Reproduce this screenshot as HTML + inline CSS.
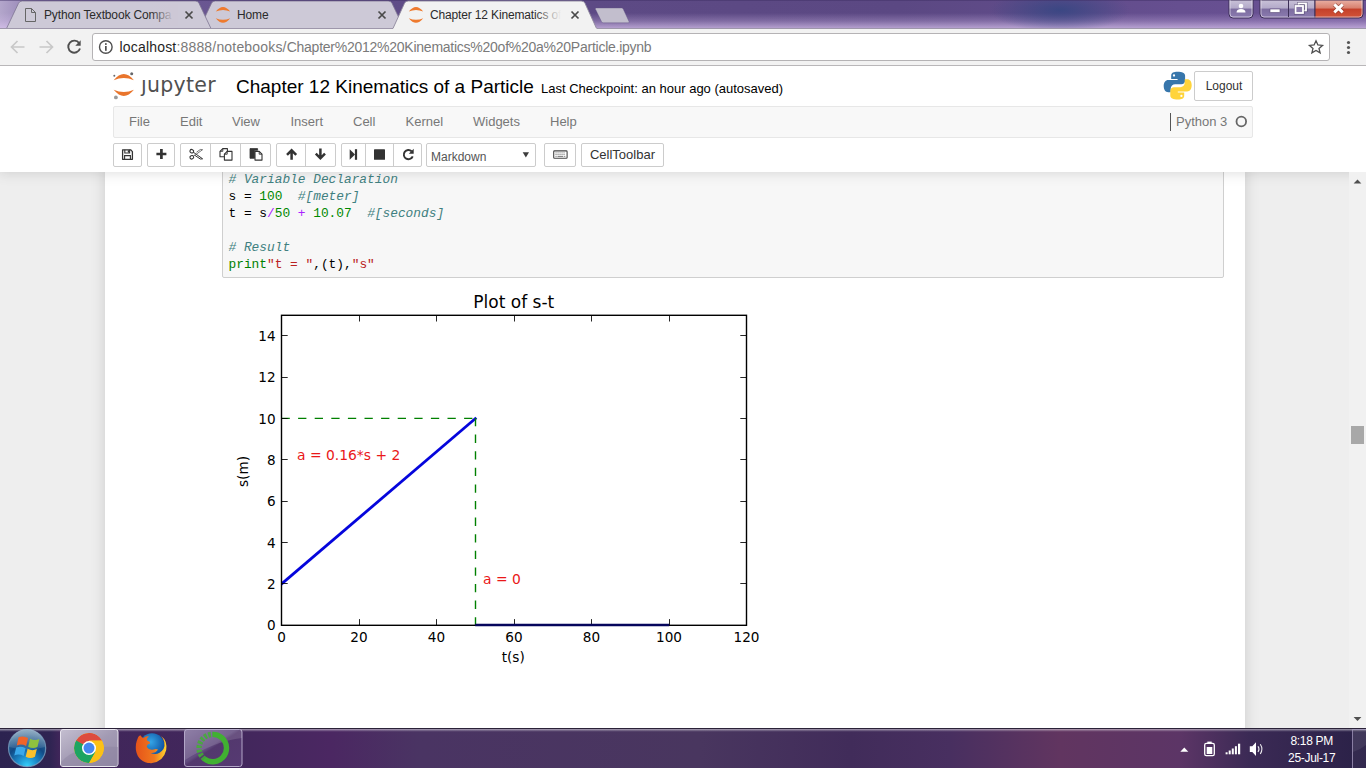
<!DOCTYPE html>
<html lang="en">
<head>
<meta charset="utf-8">
<title>Chapter 12 Kinematics of a Particle</title>
<style>
*{box-sizing:border-box;margin:0;padding:0}
html,body{width:1366px;height:768px;overflow:hidden;background:#fff;font-family:"Liberation Sans",Arial,sans-serif}
.abs{position:absolute}
#screen{position:relative;width:1366px;height:768px;overflow:hidden}

/* ---------- window frame / tab strip ---------- */
#titlebar{left:0;top:0;width:1366px;height:29px;
 background:
  radial-gradient(ellipse 70px 22px at 1060px 10px,rgba(52,70,130,.85),rgba(52,70,130,0) 100%),
  linear-gradient(to bottom,rgba(214,190,236,0) 0,rgba(214,190,236,0) 13px,rgba(214,190,236,.3) 21px,rgba(218,196,238,.7) 28px),
  linear-gradient(to right,#b3a6cb 0,#8a78ad 40px,#6d5a95 140px,#5e4b86 420px,#5b4883 900px,#664f90 1180px,#6a5194 1366px);
}
.tab{top:1px;height:28px}
.tabtxt{top:8px;font-size:12px;line-height:14px;color:#2b2b2b;white-space:nowrap;overflow:hidden;letter-spacing:-.15px}
.tabx{top:8px;font-size:12px;color:#4a4a4a}

/* ---------- chrome toolbar ---------- */
#ctb{left:0;top:29px;width:1366px;height:37px;background:#f2f2f2;border-bottom:1px solid #b9b7b9}
#omni{left:92px;top:33px;width:1238px;height:28px;background:#fff;border:1px solid #b5b3b5;border-radius:3px}
#url{left:119.500px;top:39px;font-size:14px;color:#7a7a7a;white-space:nowrap;letter-spacing:.18px}
#url b{font-weight:normal;color:#1f1f1f}
#url span{letter-spacing:-.25px}

/* ---------- page ---------- */
#page{left:0;top:66px;width:1366px;height:662px;background:#eee;overflow:hidden}
#nbwhite{left:105px;top:100px;width:1140px;height:600px;background:#fff;box-shadow:0 0 12px 1px rgba(87,87,87,.2)}
#header{left:0;top:0;width:1366px;height:106px;background:#fff;box-shadow:0 0 12px 1px rgba(87,87,87,.2)}
#jtxt{left:141px;top:6.500px;font-family:"DejaVu Sans","Liberation Sans",sans-serif;font-size:20.5px;line-height:24px;color:#505050;letter-spacing:.3px}
#nbname{left:236px;top:10px;font-size:19px;line-height:22px;color:#000;white-space:nowrap}
#ckpt{left:541px;top:15px;font-size:13px;line-height:15px;color:#000;white-space:nowrap}
#logout{left:1194px;top:5px;width:59px;height:30px;border:1px solid #ccc;border-radius:2px;background:#fff;font-size:12px;color:#333;text-align:center;line-height:29px;padding-left:1px}
#menubar{left:113px;top:40px;width:1140px;height:32px;background:#f8f8f8;border:1px solid #e7e7e7;border-radius:2px}
.mi{top:47.500px;font-size:13px;line-height:15px;color:#777;white-space:nowrap}
.tb{top:77px;height:24px;border:1px solid #ccc;background:#fff;border-radius:2px}
.tb i{position:absolute;top:0;bottom:0;width:1px;background:#ccc}
#celltype{left:426px;top:77px;width:110px;height:24px;border:1px solid #ccc;border-radius:2px;background:#fff;font-size:12px;color:#555;line-height:27px;padding-left:4px}
#ctbtxt{left:581px;top:77px;width:83px;height:24px;border:1px solid #ccc;border-radius:2px;background:#fff;font-size:13px;color:#333;text-align:center;line-height:21px}

#inputarea{left:222px;top:96px;width:1002px;height:116px;background:#f7f7f7;border:1px solid #cfcfcf;border-radius:2px}
#code{left:228.500px;top:104.600px;font-family:"Liberation Mono",monospace;font-size:12.83px;line-height:17px;color:#000;white-space:pre}
#code .c{color:#408080;font-style:italic}
#code .n{color:#080}
#code .o{color:#a2f}
#code .k{color:#008000}
#code .s{color:#ba2121}

/* ---------- scrollbar ---------- */
#sb{left:1349px;top:172px;width:17px;height:556px;background:#f1f1f1}
#thumb{left:1351px;top:426px;width:13px;height:18px;background:#a8a8a8}

/* ---------- taskbar ---------- */
#taskbar{left:0;top:728px;width:1366px;height:40px;
 background:
  linear-gradient(to bottom,rgba(255,255,255,.55) 0,rgba(255,255,255,.12) 2px,rgba(255,255,255,0) 3px),
  linear-gradient(to right,#2c2350 0,#2f2452 50px,#40265a 60px,#42275c 240px,#4b2762 330px,#4a3463 420px,#49365f 700px,#412c5a 850px,#482f60 950px,#613560 1060px,#5c3566 1180px,#3b2a55 1250px,#2a2147 1366px);
 border-top:1px solid #2a2238}
.clock{color:#fff;font-size:12px;line-height:14px;white-space:nowrap;text-align:center;width:80px;left:1271.700px;letter-spacing:-.3px}
</style>
</head>
<body>
<div id="screen">

<!-- ======= title bar + tabs ======= -->
<div id="titlebar" class="abs"></div>
<svg class="abs" style="left:0;top:0" width="1366" height="30" viewBox="0 0 1366 30">
  <!-- inactive tab 2 -->
  <path d="M199.5 28.5 L211.5 3.300 Q212.5 1 215.3 1 L388.2 1 Q391.0 1 392.0 3.300 L404.0 28.5 Z" fill="#cdc9d7" stroke="#7d7592" stroke-width=".8"/>
  <!-- inactive tab 1 -->
  <path d="M6.5 28.5 L18.5 3.300 Q19.5 1 22.3 1 L195.2 1 Q198.0 1 199.0 3.300 L211.0 28.5 Z" fill="#cdc9d7" stroke="#7d7592" stroke-width=".8"/>
  <!-- new tab button -->
  <path d="M596.300 8 L621.500 8 Q622.700 8 623.300 9.200 L629 21.500 Q629.500 22.800 628.200 22.800 L603.300 22.800 Q602.100 22.800 601.500 21.600 L595.500 9.200 Q595 8 596.300 8 Z" fill="#c2becd" stroke="#5f5180" stroke-opacity=".55" stroke-width=".7"/>
  <line x1="0" y1="28.500" x2="1366" y2="28.500" stroke="#9e97ab" stroke-width="1"/>
  <line x1="0" y1=".5" x2="1366" y2=".5" stroke="#3d2f63" stroke-opacity=".45" stroke-width="1"/>
  <!-- active tab -->
  <path d="M392.5 29.5 L404.5 3.300 Q405.5 1 408.3 1 L581.2 1 Q584.0 1 585.0 3.300 L597.0 29.5 Z" fill="#f2f2f2" stroke="#8d879c" stroke-width=".9"/>
  <rect x="393.500" y="28" width="203" height="2" fill="#f2f2f2"/>
  <!-- page icon -->
  <path d="M25.500 8.500 L31.500 8.500 L35.500 12.500 L35.500 21.500 L25.500 21.500 Z M31.500 8.500 L31.500 12.500 L35.500 12.500" fill="none" stroke="#666" stroke-width="1"/>
  <!-- jupyter favicons -->
  <g fill="#ee7a2e"><path d="M215.8 11.600 Q223.0 2.600 230.2 11.600 Q223.0 8.300 215.8 11.600 Z"/><path d="M215.8 18.200 Q223.0 27.200 230.2 18.200 Q223.0 21.500 215.8 18.200 Z"/><path d="M408.8 11.600 Q416.0 2.600 423.2 11.600 Q416.0 8.300 408.8 11.600 Z"/><path d="M408.8 18.200 Q416.0 27.200 423.2 18.200 Q416.0 21.500 408.8 18.200 Z"/></g>
  <!-- close x -->
  <g stroke="#4a4a4a" stroke-width="1.700" fill="none">
    <path d="M185.500 11.500 L192.500 18.500 M192.500 11.500 L185.500 18.500"/>
    <path d="M378.500 11.500 L385.500 18.500 M385.500 11.500 L378.500 18.500"/>
    <path d="M571.500 11.500 L578.500 18.500 M578.500 11.500 L571.500 18.500"/>
  </g>
</svg>
<div class="abs tabtxt" style="left:44px;width:132px">Python Textbook Compa</div>
<div class="abs tabtxt" style="left:237px;width:120px">Home</div>
<div class="abs tabtxt" style="left:430px;width:132px">Chapter 12 Kinematics of</div>
<div class="abs" style="left:150px;top:4px;width:28px;height:22px;background:linear-gradient(to right,rgba(205,200,214,0),rgba(205,200,214,1) 85%)"></div>
<div class="abs" style="left:534px;top:4px;width:30px;height:22px;background:linear-gradient(to right,rgba(242,242,242,0),rgba(242,242,242,1) 90%)"></div>

<!-- window buttons -->
<svg class="abs" style="left:1224px;top:0" width="142" height="22" viewBox="0 0 142 22">
  <defs>
    <linearGradient id="wb" x1="0" y1="0" x2="0" y2="1"><stop offset="0" stop-color="#c9c2d8"/><stop offset=".45" stop-color="#b3aac9"/><stop offset=".5" stop-color="#7c6c9f"/><stop offset="1" stop-color="#8b7bb0"/></linearGradient>
    <linearGradient id="wc" x1="0" y1="0" x2="0" y2="1"><stop offset="0" stop-color="#e9b0a4"/><stop offset=".45" stop-color="#d8806e"/><stop offset=".5" stop-color="#c4402a"/><stop offset="1" stop-color="#d2553a"/></linearGradient>
  </defs>
  <path d="M5 0 L5 14 Q5 18 9 18 L25 18 Q29 18 29 14 L29 0 Z" fill="url(#wb)" stroke="#3c2f57" stroke-width="1"/>
  <path d="M6 0 L6 14 Q6 17 9 17 L25 17 Q28 17 28 14 L28 0" fill="none" stroke="#e6e0f0" stroke-opacity=".7" stroke-width="1"/>
  <path d="M36 0 L36 14 Q36 18 40 18 L91 18 L91 0 Z" fill="url(#wb)" stroke="#3c2f57" stroke-width="1"/>
  <path d="M91 0 L91 18 L135 18 Q139 18 139 14 L139 0 Z" fill="url(#wc)" stroke="#3c2f57" stroke-width="1"/>
  <path d="M37 0 L37 14 Q37 17 40 17 L135 17 Q138 17 138 14 L138 0" fill="none" stroke="#f0e8f4" stroke-opacity=".6" stroke-width="1"/>
  <line x1="64.500" y1="0" x2="64.500" y2="17" stroke="#3c2f57"/>
  <!-- user glyph -->
  <circle cx="17" cy="6" r="2.300" fill="#fff"/><path d="M12.500 12.500 Q12.500 9 17 9 Q21.500 9 21.500 12.500 Z" fill="#fff"/>
  <!-- min -->
  <rect x="46" y="9" width="10" height="3.500" fill="#fff" stroke="#5a4a78" stroke-width=".6"/>
  <!-- max -->
  <rect x="74.500" y="3.500" width="7.500" height="7" fill="none" stroke="#3c2f57" stroke-opacity=".6" stroke-width="3"/><rect x="74.500" y="3.500" width="7.500" height="7" fill="none" stroke="#fff" stroke-width="1.800"/>
  <rect x="71.500" y="6" width="7.500" height="7" fill="#8a7bab" stroke="#3c2f57" stroke-opacity=".6" stroke-width="3"/><rect x="71.500" y="6" width="7.500" height="7" fill="#8a7bab" stroke="#fff" stroke-width="1.800"/>
  <!-- close -->
  <path d="M110.300 4.300 L118.700 12.300 M118.700 4.300 L110.300 12.300" stroke="#6e241a" stroke-opacity=".55" stroke-width="4.400"/><path d="M110.300 4.300 L118.700 12.300 M118.700 4.300 L110.300 12.300" stroke="#fff" stroke-width="3"/>
</svg>

<!-- ======= chrome toolbar ======= -->
<div id="ctb" class="abs"></div>
<div id="omni" class="abs"></div>
<svg class="abs" style="left:0;top:29px" width="1366" height="36" viewBox="0 29 1366 36">
  <g fill="none" stroke="#c8c8c8" stroke-width="1.700">
    <path d="M24.500 47 L11.500 47 M17.500 41 L11.500 47 L17.500 53"/>
    <path d="M39.500 47 L52.500 47 M46.500 41 L52.500 47 L46.500 53"/>
  </g>
  <path d="M79.200 43.200 A6 6 0 1 0 80 48.500" fill="none" stroke="#4f4f4f" stroke-width="1.900"/>
  <path d="M80.700 40.300 L80.700 45.700 L75.300 45.700 Z" fill="#4f4f4f"/>
  <circle cx="105.800" cy="47" r="6.300" fill="none" stroke="#4f4f4f" stroke-width="1.400"/>
  <rect x="105" y="46" width="1.700" height="4.800" fill="#4f4f4f"/><rect x="105" y="43.200" width="1.700" height="1.700" fill="#4f4f4f"/>
  <path d="M1316 40.800 L1317.900 45 L1322.500 45.400 L1319 48.400 L1320.100 52.900 L1316 50.500 L1311.900 52.900 L1313 48.400 L1309.500 45.400 L1314.100 45 Z" fill="none" stroke="#4f4f4f" stroke-width="1.300"/>
  <circle cx="1348.500" cy="42.500" r="1.600" fill="#555"/><circle cx="1348.500" cy="47.500" r="1.600" fill="#555"/><circle cx="1348.500" cy="52.500" r="1.600" fill="#555"/>
</svg>
<div id="url" class="abs"><b>localhost</b>:8888/notebooks/<span>Chapter%2012%20Kinematics%20of%20a%20Particle.ipynb</span></div>

<!-- ======= page ======= -->
<div id="page" class="abs">
  <div id="nbwhite" class="abs"></div>

  <!-- code cell -->
  <div id="inputarea" class="abs"></div>
<pre id="code" class="abs"><span class="c"># Variable Declaration</span>
s = <span class="n">100</span>  <span class="c">#[meter]</span>
t = s<span class="o">/</span><span class="n">50</span> <span class="o">+</span> <span class="n">10.07</span>  <span class="c">#[seconds]</span>

<span class="c"># Result</span>
<span class="k">print</span><span class="s">"t = "</span>,(t),<span class="s">"s"</span></pre>

  <!-- plot -->
  <svg id="plot" class="abs" style="left:222px;top:220px" width="560" height="390" viewBox="222 286 560 390" font-family="'DejaVu Sans',sans-serif">
    <defs><clipPath id="axclip"><rect x="281.5" y="315.3" width="465.0" height="310.0"/></clipPath></defs>
    <g clip-path="url(#axclip)">
    <path d="M281.5 583.97 L475.25 418.63" fill="none" stroke="#0505dc" stroke-width="2.8" stroke-linecap="square"/>
    <path d="M475.25 625.3 L669.0 625.3" fill="none" stroke="#0505dc" stroke-width="2.8"/>
    <path d="M281.5 418.4 L475.25 418.4" fill="none" stroke="#008000" stroke-width="1.4" stroke-dasharray="8.3 8.3"/>
    <path d="M475.5 418.0 L475.5 625.3" fill="none" stroke="#008000" stroke-width="1.4" stroke-dasharray="8.3 8.3"/>
    </g>
    <path d="M281.5 625.3 V619.0999999999999 M281.5 315.3 V321.5 M359.5 625.3 V619.0999999999999 M359.5 315.3 V321.5 M436.5 625.3 V619.0999999999999 M436.5 315.3 V321.5 M514.5 625.3 V619.0999999999999 M514.5 315.3 V321.5 M591.5 625.3 V619.0999999999999 M591.5 315.3 V321.5 M669.5 625.3 V619.0999999999999 M669.5 315.3 V321.5 M746.5 625.3 V619.0999999999999 M746.5 315.3 V321.5 M281.5 625.5 H287.7 M746.5 625.5 H740.3 M281.5 583.5 H287.7 M746.5 583.5 H740.3 M281.5 542.5 H287.7 M746.5 542.5 H740.3 M281.5 501.5 H287.7 M746.5 501.5 H740.3 M281.5 459.5 H287.7 M746.5 459.5 H740.3 M281.5 418.5 H287.7 M746.5 418.5 H740.3 M281.5 377.5 H287.7 M746.5 377.5 H740.3 M281.5 335.5 H287.7 M746.5 335.5 H740.3" fill="none" stroke="#000" stroke-width="1" stroke-opacity=".85"/>
    <rect x="281.5" y="315.3" width="465.0" height="310.0" fill="none" stroke="#000" stroke-width="1.4"/>
    <path d="M475.2 625 H669.2" fill="none" stroke="#06065c" stroke-width="2.500"/>
    <g font-size="13.6" fill="#000" text-anchor="middle">
    <text x="281.5" y="641.8">0</text>
    <text x="359.0" y="641.8">20</text>
    <text x="436.5" y="641.8">40</text>
    <text x="514.0" y="641.8">60</text>
    <text x="591.5" y="641.8">80</text>
    <text x="669.0" y="641.8">100</text>
    <text x="746.5" y="641.8">120</text>
    </g>
    <g font-size="13.6" fill="#000" text-anchor="end">
    <text x="275.6" y="630.2">0</text>
    <text x="275.6" y="588.9">2</text>
    <text x="275.6" y="547.5">4</text>
    <text x="275.6" y="506.2">6</text>
    <text x="275.6" y="464.9">8</text>
    <text x="275.6" y="423.5">10</text>
    <text x="275.6" y="382.2">12</text>
    <text x="275.6" y="340.9">14</text>
    </g>
    <text x="513.8" y="307.8" font-size="17" text-anchor="middle" fill="#000">Plot of s-t</text>
    <text x="513.2" y="662" font-size="13.6" text-anchor="middle" fill="#000">t(s)</text>
    <text transform="translate(247.6 471.5) rotate(-90)" font-size="13.6" text-anchor="middle" fill="#000">s(m)</text>
    <text x="297" y="459.9" font-size="13.89" fill="#ea1818">a = 0.16*s + 2</text>
    <text x="483" y="583.8" font-size="13.89" fill="#ea1818">a = 0</text>
  </svg>

  <!-- header -->
  <div id="header" class="abs">
    <svg class="abs" style="left:108px;top:0" width="32" height="40" viewBox="108 66 32 40">
      <path d="M113.700 80.200 Q123.800 67.800 133.900 80.200 Q123.800 75.700 113.700 80.200 Z" fill="#e9752c"/>
      <path d="M113.700 89.700 Q123.800 102.100 133.900 89.700 Q123.800 94.200 113.700 89.700 Z" fill="#e9752c"/>
      <circle cx="115.900" cy="97.400" r="1.900" fill="#9a9a9a"/><circle cx="131.700" cy="73.700" r="1.500" fill="#66676b"/><circle cx="114.300" cy="75.700" r="1" fill="#66676b"/>
    </svg>
    <div id="jtxt" class="abs">jupyter</div>
    <div class="abs" style="left:141px;top:9px;width:6px;height:4.500px;background:#fff"></div>
    <div id="nbname" class="abs">Chapter 12 Kinematics of a Particle</div>
    <div id="ckpt" class="abs">Last Checkpoint: an hour ago (autosaved)</div>
    <div id="logout" class="abs">Logout</div>
    <div id="menubar" class="abs"></div>
    <div class="abs mi" style="left:129px">File</div>
    <div class="abs mi" style="left:180px">Edit</div>
    <div class="abs mi" style="left:232px">View</div>
    <div class="abs mi" style="left:290.5px">Insert</div>
    <div class="abs mi" style="left:353px">Cell</div>
    <div class="abs mi" style="left:405.5px">Kernel</div>
    <div class="abs mi" style="left:473px">Widgets</div>
    <div class="abs mi" style="left:550px">Help</div>
    <div class="abs" style="left:1170px;top:47px;width:1px;height:18px;background:#555"></div>
    <div class="abs mi" style="left:1176px">Python 3</div>
    <svg class="abs" style="left:1233px;top:47px" width="17" height="17" viewBox="0 0 17 17"><circle cx="8.300" cy="8.500" r="4.800" fill="none" stroke="#666" stroke-width="1.800"/></svg>

    <div class="abs tb" style="left:113px;width:29px"></div>
    <div class="abs tb" style="left:147px;width:28px"></div>
    <div class="abs tb" style="left:180px;width:91px"><i style="left:29px"></i><i style="left:59px"></i></div>
    <div class="abs tb" style="left:276px;width:60px"><i style="left:28px"></i></div>
    <div class="abs tb" style="left:341px;width:81px"><i style="left:23px"></i><i style="left:51px"></i></div>
    <div id="celltype" class="abs">Markdown</div>
    <div class="abs tb" style="left:544px;width:32px"></div>
    <div id="ctbtxt" class="abs">CellToolbar</div>
    <svg class="abs" style="left:0;top:0" width="1366" height="106" viewBox="0 66 1366 106">
      <!-- save -->
      <path d="M122.600 149.800 H130.600 L132.400 151.600 V159.300 H122.600 Z" fill="#fff" stroke="#333" stroke-width="1.300" stroke-linejoin="round"/>
      <path d="M124.800 149.800 V153 H129.600 V149.800" fill="none" stroke="#333" stroke-width="1.100"/>
      <rect x="127.800" y="150.300" width="1.300" height="2.200" fill="#333"/>
      <path d="M124.600 159.300 V155.600 H130.400 V159.300" fill="none" stroke="#333" stroke-width="1.100"/>
      <!-- plus -->
      <path d="M161.400 149 V159 M156.400 154 H166.400" stroke="#333" stroke-width="2.700" fill="none"/>
      <!-- scissors -->
      <g fill="none" stroke="#333" stroke-width="1.100" transform="translate(0 -.5)">
        <ellipse cx="191.800" cy="151.700" rx="1.900" ry="1.700" transform="rotate(25 191.800 151.700)"/>
        <ellipse cx="191.800" cy="157.800" rx="1.900" ry="1.700" transform="rotate(-25 191.800 157.800)"/>
        <path d="M193.300 152.700 L202.600 159.300 L200.300 159.500 L194.500 155.600" stroke-width="1"/>
        <path d="M193.300 156.800 L202.600 150.200 L200.300 150 L196.500 152.700" stroke-width=".9" stroke="#666"/>
      </g>
      <!-- copy -->
      <g fill="#fff" stroke="#333" stroke-width="1.100" stroke-linejoin="round">
        <path d="M220 151.300 L222.800 148.600 H227.400 V156.800 H220 Z"/>
        <path d="M220 151.300 H222.800 V148.600" fill="none" stroke-width=".9"/>
        <path d="M224.400 154.200 L227.200 151.400 H232 V160.100 H224.400 Z"/>
        <path d="M224.400 154.200 H227.200 V151.400" fill="none" stroke-width=".9"/>
      </g>
      <!-- paste -->
      <path d="M250 148.600 H257.600 V150.300 H254.500 V158.300 H250 Z" fill="#333" stroke="#333" stroke-width=".8"/>
      <path d="M255 151.400 H259.200 L262 154.200 V160.100 H255 Z" fill="#fff" stroke="#333" stroke-width="1.100" stroke-linejoin="round"/>
      <path d="M259.200 151.400 V154.200 H262" fill="none" stroke="#333" stroke-width=".9"/>
      <!-- arrow up -->
      <path d="M291.600 159.800 V151.500 M287 154.900 L291.600 150.300 L296.200 154.900" fill="none" stroke="#333" stroke-width="2.500" stroke-linecap="butt" stroke-linejoin="miter"/>
      <!-- arrow down -->
      <path d="M320.400 148.600 V157 M315.800 153.700 L320.400 158.300 L325 153.700" fill="none" stroke="#333" stroke-width="2.500" stroke-linecap="butt" stroke-linejoin="miter"/>
      <!-- step forward -->
      <path d="M349.700 149.200 L355 154.500 L349.700 159.800 Z" fill="#333"/>
      <rect x="354.900" y="149.200" width="2.200" height="10.600" fill="#333"/>
      <!-- stop -->
      <rect x="374" y="149.200" width="11" height="10.600" rx=".6" fill="#333"/>
      <!-- repeat -->
      <path d="M411.600 151.300 A4.600 4.600 0 1 0 412.700 156.300" fill="none" stroke="#333" stroke-width="1.900"/>
      <path d="M413.700 148.800 V153.700 H408.800 Z" fill="#333"/>
      <!-- select arrow -->
      <path d="M522.700 152.300 H529 L525.850 157.600 Z" fill="#3c3c3c"/>
      <!-- keyboard -->
      <rect x="553.700" y="150.900" width="13.400" height="7.300" rx=".8" fill="#fff" stroke="#444" stroke-width="1.100"/>
      <path d="M555.500 152.900 H565.300 M555.500 154.600 H565.300" stroke="#777" stroke-width="1" stroke-dasharray="1.100 .9" fill="none"/>
      <path d="M555.500 156.400 H556.600 M557.500 156.400 H563.300 M564.200 156.400 H565.300" stroke="#777" stroke-width="1" fill="none"/>
      <!-- python logo -->
      <g>
        <path d="M1177.400 71.800 c-3.500 0 -6.200 1 -6.200 3.800 v3.300 h6.400 v1 h-9.300 c-2.800 0 -4.600 2.400 -4.600 6.200 c0 3.800 1.700 6.100 4.500 6.100 h2.500 v-3.600 c0 -2.500 2 -4.400 4.500 -4.400 h6.300 c2 0 3.600 -1.600 3.600 -3.700 v-4.900 c0 -2.400 -2.800 -3.800 -7.700 -3.800 z" fill="#3776ab"/>
        <circle cx="1174" cy="75.500" r="1.150" fill="#fff"/>
        <path d="M1178 99.600 c3.500 0 6.200 -1 6.200 -3.800 v-3.300 h-6.400 v-1 h9.300 c2.800 0 4.600 -2.400 4.600 -6.200 c0 -3.800 -1.700 -6.100 -4.500 -6.100 h-2.500 v3.600 c0 2.500 -2 4.400 -4.500 4.400 h-6.300 c-2 0 -3.600 1.600 -3.600 3.700 v4.900 c0 2.400 2.800 3.800 7.700 3.800 z" fill="#ffd43b"/>
        <circle cx="1181.400" cy="95.900" r="1.150" fill="#fff"/>
      </g>
    </svg>
  </div>
</div>

<!-- ======= scrollbar ======= -->
<div id="sb" class="abs"></div>
<div id="thumb" class="abs"></div>
<svg class="abs" style="left:1349px;top:172px" width="17" height="556" viewBox="0 172 17 556">
  <path d="M4.600 183.400 L8.500 179.400 L12.400 183.400 Z" fill="#505050"/>
  <path d="M4.600 717 L8.500 721 L12.400 717 Z" fill="#505050"/>
</svg>

<!-- ======= taskbar ======= -->
<div id="taskbar" class="abs"></div>
<svg class="abs" style="left:0;top:728px" width="1366" height="40" viewBox="0 728 1366 40">
  <defs>
    <radialGradient id="orb" cx=".5" cy=".98" r=".98"><stop offset="0" stop-color="#35d0fb"/><stop offset=".3" stop-color="#1b86c6"/><stop offset=".58" stop-color="#114a86"/><stop offset=".8" stop-color="#2a5f8f"/><stop offset="1" stop-color="#5f88a8"/></radialGradient>
    <linearGradient id="orbhi" x1="0" y1="0" x2="0" y2="1"><stop offset="0" stop-color="#c9d6e0" stop-opacity=".5"/><stop offset="1" stop-color="#fff" stop-opacity=".08"/></linearGradient>
    <linearGradient id="btnA" x1="0" y1="0" x2="1" y2="1"><stop offset="0" stop-color="#c4bed0"/><stop offset=".5" stop-color="#a29ab3"/><stop offset="1" stop-color="#9389a6"/></linearGradient>
    <linearGradient id="btnB" x1="0" y1="0" x2="1" y2="1"><stop offset="0" stop-color="#7f6d9a"/><stop offset=".45" stop-color="#634d80"/><stop offset=".5" stop-color="#53386e"/><stop offset="1" stop-color="#563a72"/></linearGradient>
    <radialGradient id="ffg" cx=".45" cy=".35" r=".6"><stop offset="0" stop-color="#35a5e6"/><stop offset="1" stop-color="#0c4fa0"/></radialGradient>
    <linearGradient id="fox" x1="0" y1="0" x2="1" y2="0"><stop offset="0" stop-color="#e5531a"/><stop offset=".6" stop-color="#f0781e"/><stop offset="1" stop-color="#ffd42e"/></linearGradient>
    <clipPath id="chc"><circle cx="89" cy="748.100" r="15"/></clipPath>
  </defs>
  <!-- start orb -->
  <circle cx="27.100" cy="748.100" r="18.600" fill="url(#orb)" stroke="#7fa6c6" stroke-opacity=".75" stroke-width="1.200"/>
  <path d="M9.300 747 A17.800 17.800 0 0 1 44.900 747 Q27 752 9.300 747 Z" fill="url(#orbhi)"/>
  <g transform="translate(27.600 747.600) scale(1.130) translate(-27.600 -747.600)">
  <path d="M19.600 738.500 Q24 736.800 28 739.200 L26.300 746.200 Q22.300 744 18 745.700 Z" fill="#f0642a"/>
  <path d="M29.800 739.800 Q33.800 742 38 740 L36.300 747 Q32.300 749 28.100 746.800 Z" fill="#8fc23e"/>
  <path d="M17.500 747.500 Q21.800 745.800 25.800 748.100 L24.100 755 Q20.100 752.800 15.800 754.500 Z" fill="#3aa8ea"/>
  <path d="M27.600 748.700 Q31.700 751 35.800 748.900 L34.100 755.800 Q30 758 25.900 755.600 Z" fill="#fbc02b"/>
  </g>
  <!-- chrome button -->
  <rect x="60.500" y="729.500" width="57.500" height="37" rx="2.500" fill="url(#btnA)" stroke="#e9e6ef" stroke-width="1"/>
  <path d="M61 762 Q75 745 118 747 L118 766 L61 766 Z" fill="#8c83a0" fill-opacity=".45"/>
  <g clip-path="url(#chc)">
    <circle cx="89" cy="748.100" r="15" fill="#fbc116"/>
    <path d="M89 748.100 L76.010 740.600 A15 15 0 0 1 101.990 740.600 L89 740.600 Z" fill="#dd4b3e"/>
    <path d="M89 733.100 A15 15 0 0 1 101.990 740.600 L89 740.600 Z M76.010 740.600 L89 740.600 L89 748.100 Z" fill="#dd4b3e"/>
    <path d="M76.010 740.600 A15 15 0 0 0 89 763.100 L95.500 751.850 L89 748.100 Z" fill="#1da462"/>
    <path d="M76.010 740.600 L82.500 751.850 L89 748.100 Z M82.500 751.850 L95.500 751.850 L89 763.100 Z" fill="#1da462"/>
    <path d="M89 763.100 A15 15 0 0 0 101.990 740.600 L89 740.600 L95.500 751.850 Z" fill="#fbc116"/>
  </g>
  <circle cx="89" cy="748.100" r="7" fill="#fff"/>
  <circle cx="89" cy="748.100" r="5.500" fill="#4587f0"/>
  <!-- firefox -->
  <circle cx="152" cy="745.800" r="12.600" fill="url(#ffg)"/>
  <path d="M137.500 739 Q138.500 735 140.800 735.500 Q141.500 737.500 143.500 738 Q146 735.500 149 736.500 Q146 738.500 147.500 741 Q150.500 741 150 743.500 Q146.500 744.500 146.800 747 Q149 750.500 153.500 749.500 Q156 748.500 158 749.500 Q155.500 753.500 150.500 753 Q158 756.500 163.500 749 Q166.500 742 161 736 Q167.500 740.500 166.200 750 Q163.500 762 151 763.300 Q138 762.500 135.900 750 Q135.300 743.500 137.500 739 Z" fill="url(#fox)"/>
  <!-- anaconda button -->
  <rect x="184.500" y="729.500" width="57.500" height="37" rx="2.500" fill="url(#btnB)" stroke="#b3a6c8" stroke-width="1"/>
  <path d="M185 729.500 H242 V738 Q215 741 185 760 Z" fill="#fff" fill-opacity=".13"/>
  <circle cx="212.800" cy="748.100" r="13.700" fill="none" stroke="#41b032" stroke-width="5.400" stroke-dasharray="52.500 86" transform="rotate(-92 212.800 748.100)"/>
  <circle cx="212.800" cy="748.100" r="13.700" fill="none" stroke="#41b032" stroke-width="5.400" stroke-dasharray="2.700 1.500 2.700 1.500 2.700 1.500 2.700 1.500 2.700 1.500 2.700 1.500 2.700 1.500 2.700 60" opacity=".85" transform="rotate(127 212.800 748.100)"/>
  <!-- tray -->
  <path d="M1180.300 751.700 L1184.300 747.500 L1188.300 751.700 Z" fill="#fff"/>
  <rect x="1204.700" y="743.300" width="9.600" height="12.400" rx="1.600" fill="none" stroke="#fff" stroke-width="1.300"/>
  <rect x="1207.300" y="741.600" width="4.400" height="1.600" fill="#fff"/>
  <rect x="1206.700" y="747" width="5.600" height="7" fill="#fff"/>
  <g fill="#fff"><rect x="1225.600" y="752.300" width="2" height="2"/><rect x="1228.700" y="750.500" width="2" height="3.800"/><rect x="1231.800" y="748.500" width="2" height="5.800"/><rect x="1234.900" y="746.200" width="2" height="8.100"/><rect x="1238" y="743.700" width="2.200" height="10.600"/></g>
  <path d="M1249.800 746.300 H1252.300 L1256 742.300 V756 L1252.300 752 H1249.800 Z" fill="#fff"/>
  <path d="M1258 746.300 Q1260 749.100 1258 752 M1260.300 744.300 Q1263.500 749.100 1260.300 754" fill="none" stroke="#fff" stroke-width="1.100" stroke-opacity=".9"/>
  <!-- show desktop -->
  <rect x="1352.500" y="729.500" width="14" height="39" fill="#fff" fill-opacity=".04" stroke="#a79cc0" stroke-opacity=".75" stroke-width="1"/>
  <path d="M1353 730 H1366 V745 Q1360 750 1353 752 Z" fill="#fff" fill-opacity=".07"/>
</svg>
<div class="abs clock" style="top:733.500px">8:18 PM</div>
<div class="abs clock" style="top:750.500px">25-Jul-17</div>

</div>
</body>
</html>
